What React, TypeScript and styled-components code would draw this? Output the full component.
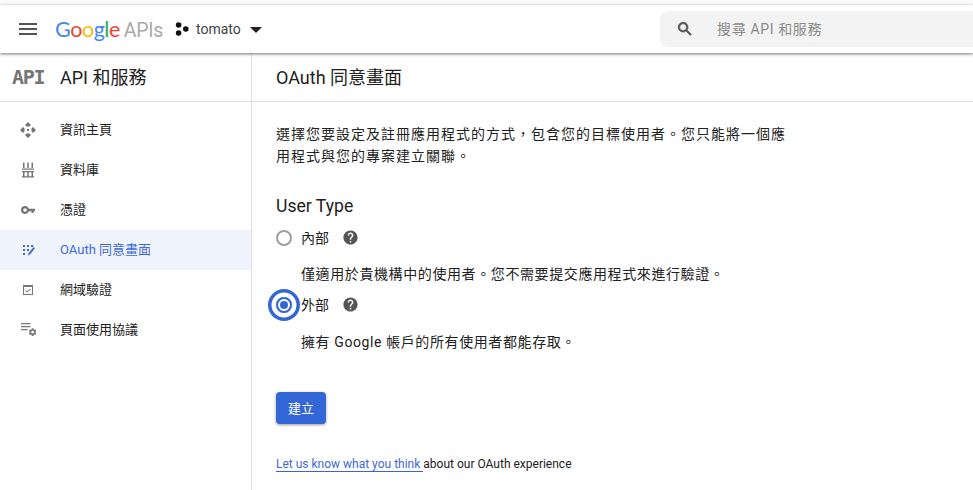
import React from "react";
import styled, { createGlobalStyle } from "styled-components";

const GlobalStyle = createGlobalStyle`
  html, body {
    margin: 0;
    padding: 0;
    background: #fff;
  }

  body {
    font-family: Roboto, "Noto Sans CJK TC", sans-serif;
    color: #212121;
    overflow: hidden;
  }
`;

const Page = styled.div`
  height: 490px;
  display: flex;
  flex-direction: column;
  padding-top: 5px;
  box-sizing: border-box;
  background: #fafafa;
`;

const TopBar = styled.header`
  height: 48px;
  flex: none;
  display: flex;
  align-items: center;
  background: #fff;
  box-shadow: 0 1px 3px 0 rgba(0, 0, 0, 0.55);
  position: relative;
  z-index: 1;
`;

const MenuButton = styled.svg`
  width: 24px;
  height: 24px;
  margin-left: 16px;
  fill: #555;
  flex: none;
`;

const Brand = styled.div`
  display: flex;
  align-items: baseline;
  margin-left: 15px;
  width: 106px;
  flex: none;
  font-family: Lato, sans-serif;
  font-size: 21.5px;
  letter-spacing: -0.5px;
`;

const BrandLetter = styled.span<{ $color: string }>`
  color: ${(p) => p.$color};
`;

const BrandSuffix = styled.span`
  margin-left: 4px;
  font-family: Roboto, sans-serif;
  font-size: 19.5px;
  letter-spacing: -0.3px;
  color: #a9a9a9;
`;

const ProjectPicker = styled.div`
  display: flex;
  align-items: center;
  margin-left: 14px;
  font-size: 14px;
  color: #424242;
`;

const ProjectIcon = styled.svg`
  width: 14px;
  height: 14px;
  margin-right: 7px;
`;

const Caret = styled.span`
  width: 0;
  height: 0;
  margin-left: 9px;
  margin-top: 2px;
  border-left: 6px solid transparent;
  border-right: 6px solid transparent;
  border-top: 6px solid #212121;
`;

const SearchBox = styled.div`
  margin-left: auto;
  width: 313px;
  height: 36px;
  display: flex;
  align-items: center;
  background: #f3f3f3;
  border-radius: 8px 0 0 8px;
  font-size: 14px;
  letter-spacing: 0.64px;
  color: #8a8a8a;
`;

const SearchIcon = styled.svg`
  width: 18px;
  height: 18px;
  margin-left: 16px;
  margin-right: 23px;
  fill: #555;
  stroke: #555;
  stroke-width: 1;
`;

/* CJK glyphs sit low in their line box, nudge the text up to its row's centre */
const Lifted = styled.span<{ $by?: number }>`
  margin-bottom: ${(p) => p.$by ?? 3}px;
`;

const Body = styled.div`
  flex: 1;
  display: flex;
  min-height: 0;
  background: #fff;
`;

const Sidebar = styled.nav`
  width: 251px;
  flex: none;
  border-right: 1px solid #e0e0e0;
`;

const SidebarHeader = styled.div`
  height: 48px;
  display: flex;
  align-items: center;
  border-bottom: 1px solid #e0e0e0;
  margin-bottom: 8px;
  font-size: 18px;
`;

const ApiMark = styled.span`
  width: 60px;
  padding-left: 12px;
  box-sizing: border-box;
  font-family: "DejaVu Sans Mono", monospace;
  font-weight: 700;
  font-size: 20px;
  letter-spacing: -1.3px;
  color: #757575;
`;

const NavItem = styled.div<{ $active?: boolean }>`
  height: 40px;
  display: flex;
  align-items: center;
  font-size: 13px;
  color: ${(p) => (p.$active ? "#3f6ad8" : "#212121")};
  background: ${(p) => (p.$active ? "#eff4fc" : "transparent")};
`;

const NavIconSlot = styled.svg<{ $active?: boolean }>`
  width: 16px;
  height: 16px;
  margin-left: 20px;
  margin-right: 24px;
  fill: ${(p) => (p.$active ? "#3f6ad8" : "#757575")};
  flex: none;
`;

const Main = styled.main`
  flex: 1;
  min-width: 0;
`;

const MainHeader = styled.div`
  height: 48px;
  display: flex;
  align-items: center;
  padding-left: 24px;
  border-bottom: 1px solid #e0e0e0;
  font-size: 18px;
`;

const Content = styled.div`
  padding: 21px 24px 0;
`;

const Intro = styled.p`
  margin: 0;
  width: 520px;
  font-size: 14px;
  line-height: 22px;
  letter-spacing: 1px;
`;

const SectionTitle = styled.h2`
  margin: 27px 0 0;
  font-size: 17.6px;
  font-weight: 400;
  line-height: 24px;
`;

const RadioRow = styled.div`
  display: flex;
  align-items: center;
  height: 24px;
  margin-top: 8px;
  font-size: 14px;
`;

const Radio = styled.span<{ $checked?: boolean }>`
  width: 16px;
  height: 16px;
  flex: none;
  box-sizing: border-box;
  margin-right: 9px;
  border-radius: 50%;
  border: 2px solid ${(p) => (p.$checked ? "#3367d6" : "#9e9e9e")};
  display: flex;
  align-items: center;
  justify-content: center;
  box-shadow: ${(p) =>
    p.$checked ? "0 0 0 4.5px #fff, 0 0 0 8px #3367d6" : "none"};
`;

const RadioDot = styled.span`
  width: 8px;
  height: 8px;
  border-radius: 50%;
  background: #3367d6;
`;

const HelpIcon = styled.svg`
  width: 17px;
  height: 17px;
  margin-left: 13px;
  margin-bottom: 2px;
  fill: #555;
`;

const Description = styled.div<{ $gap: number }>`
  margin: ${(p) => p.$gap}px 0 0 25px;
  font-size: 14px;
  line-height: 22px;
  letter-spacing: 0.6px;
`;

const PrimaryButton = styled.button`
  display: block;
  margin-top: 39px;
  width: 50px;
  height: 32px;
  padding: 0 0 2px;
  border: 0;
  border-radius: 4px;
  background: #3367d6;
  color: #fff;
  font-family: inherit;
  font-size: 13px;
  box-shadow: 0 1px 3px rgba(0, 0, 0, 0.4);
`;

const Feedback = styled.div`
  margin-top: 32px;
  font-size: 12px;
  line-height: 16px;
`;

const FeedbackLink = styled.a`
  color: #3f6ad8;
  border-bottom: 1px solid #3367d6;
  padding-right: 3px;
`;

const introText =
  "選擇您要設定及註冊應用程式的方式\uFF0C包含您的目標使用者。您只能將一個應用程式與您的專案建立關聯。";

const gearPath =
  "M19.14 12.94c.04-.3.06-.61.06-.94 0-.32-.02-.64-.07-.94l2.03-1.58c.18-.14.23-.41.12-.61l-1.92-3.32c-.12-.22-.37-.29-.59-.22l-2.39.96c-.5-.38-1.03-.7-1.62-.94l-.36-2.54c-.04-.24-.24-.41-.48-.41h-3.84c-.24 0-.43.17-.47.41l-.36 2.54c-.59.24-1.13.57-1.62.94l-2.39-.96c-.22-.08-.47 0-.59.22L2.74 8.87c-.12.21-.08.47.12.61l2.03 1.58c-.05.3-.09.63-.09.94s.02.64.07.94l-2.03 1.58c-.18.14-.23.41-.12.61l1.92 3.32c.12.22.37.29.59.22l2.39-.96c.5.38 1.03.7 1.62.94l.36 2.54c.05.24.24.41.48.41h3.84c.24 0 .44-.17.47-.41l.36-2.54c.59-.24 1.13-.56 1.62-.94l2.39.96c.22.08.47 0 .59-.22l1.92-3.32c.12-.22.07-.47-.12-.61l-2.01-1.58zM12 15.6c-1.98 0-3.6-1.62-3.6-3.6s1.62-3.6 3.6-3.6 3.6 1.62 3.6 3.6-1.62 3.6-3.6 3.6z";

const navItems: { label: string; active?: boolean; icon: React.ReactNode }[] = [
  {
    label: "資訊主頁",
    icon: (
      <path d="M8 0 11 3 9.500 4.500H6.500L5 3ZM8 16 5 13 6.500 11.500H9.500L11 13ZM0 8 3 5 4.500 6.500V9.500L3 11ZM16 8 13 11 11.500 9.500V6.500L13 5ZM7 7h2v2H7Z" />
    ),
  },
  {
    label: "資料庫",
    icon: (
      <path d="M3 0.500h1.500v5.500H3ZM7.250 0.500h1.500v5.500h-1.500ZM11.500 0.500H13v5.500h-1.500ZM2 6.500h12v1.200H2ZM2 9h12v1.200H2ZM3 10.200h1.500v4H3ZM7.250 10.200h1.500v4h-1.500ZM11.500 10.200H13v4h-1.500ZM2 14.300h12v1.200H2Z" />
    ),
  },
  {
    label: "憑證",
    icon: (
      <path
        fillRule="evenodd"
        d="M5 4a4 4 0 0 1 3.800 2.800H15v2.400h-1.300V11h-2.200V9.200H8.800A4 4 0 1 1 5 4Zm0 2.200a1.800 1.800 0 1 0 0 3.600 1.800 1.800 0 0 0 0-3.600Z"
      />
    ),
  },
  {
    label: "OAuth 同意畫面",
    active: true,
    icon: (
      <path d="M3 3h2v2H3ZM7 3h2v2H7ZM11 3h2v2h-2ZM3 7h2v2H3ZM7 7h2v2H7ZM3 11h2v2H3ZM13.500 5 15 6.300 10 12.500 8 13.500 8.500 11.300Z" />
    ),
  },
  {
    label: "網域驗證",
    icon: (
      <path
        fillRule="evenodd"
        d="M3 3h10v10H3Zm1 2v7h8V5ZM7 10.500 5.300 8.900l.7-.7 1 1 3-2.400.6.600Z"
      />
    ),
  },
  {
    label: "頁面使用協議",
    icon: (
      <>
        <path d="M1 1h9.500v1.300H1ZM1 4h9.500v1.300H1ZM1 7h6.500v1.300H1Z" />
        <path transform="translate(7.800 5.300) scale(.4)" d={gearPath} />
      </>
    ),
  },
];

const helpPath =
  "M12 2C6.480 2 2 6.480 2 12s4.480 10 10 10 10-4.480 10-10S17.520 2 12 2zm1 17h-2v-2h2v2zm2.070-7.750-.9.920C13.450 12.900 13 13.500 13 15h-2v-.5c0-1.100.45-2.100 1.170-2.830l1.240-1.260c.37-.36.590-.86.590-1.410 0-1.100-.9-2-2-2s-2 .9-2 2H8c0-2.210 1.790-4 4-4s4 1.790 4 4c0 .88-.36 1.680-.93 2.250z";

const HelpMark = () => (
  <HelpIcon viewBox="0 0 24 24">
    <path d={helpPath} />
  </HelpIcon>
);

export default function App() {
  return (
    <>
      <GlobalStyle />
      <Page>
        <TopBar>
          <MenuButton viewBox="0 0 24 24">
            <path d="M3 18h18v-2H3v2zm0-5h18v-2H3v2zm0-7v2h18V6H3z" />
          </MenuButton>
          <Brand>
            <BrandLetter $color="#4285f4">G</BrandLetter>
            <BrandLetter $color="#ea4335">o</BrandLetter>
            <BrandLetter $color="#fbbc05">o</BrandLetter>
            <BrandLetter $color="#4285f4">g</BrandLetter>
            <BrandLetter $color="#34a853">l</BrandLetter>
            <BrandLetter $color="#ea4335">e</BrandLetter>
            <BrandSuffix>APIs</BrandSuffix>
          </Brand>
          <ProjectPicker>
            <ProjectIcon viewBox="0 0 14 14">
              <circle cx="3.600" cy="3" r="2.800" fill="#111" />
              <circle cx="3.600" cy="11" r="2.800" fill="#111" />
              <circle cx="10.800" cy="7" r="2.800" fill="#111" />
            </ProjectIcon>
            tomato
            <Caret />
          </ProjectPicker>
          <SearchBox>
            <SearchIcon viewBox="0 0 24 24">
              <path d="M15.500 14h-.79l-.28-.27C15.410 12.590 16 11.110 16 9.500 16 5.910 13.090 3 9.500 3S3 5.910 3 9.500 5.910 16 9.500 16c1.610 0 3.090-.59 4.230-1.570l.27.28v.79l5 4.990L20.490 19l-4.990-5zm-6 0C7.010 14 5 11.990 5 9.500S7.010 5 9.500 5 14 7.010 14 9.500 11.990 14 9.500 14z" />
            </SearchIcon>
            <Lifted>搜尋 API 和服務</Lifted>
          </SearchBox>
        </TopBar>
        <Body>
          <Sidebar>
            <SidebarHeader>
              <ApiMark>API</ApiMark>
              <Lifted $by={2}>API 和服務</Lifted>
            </SidebarHeader>
            {navItems.map((item) => (
              <NavItem key={item.label} $active={item.active}>
                <NavIconSlot viewBox="0 0 16 16" $active={item.active}>
                  {item.icon}
                </NavIconSlot>
                <Lifted>{item.label}</Lifted>
              </NavItem>
            ))}
          </Sidebar>
          <Main>
            <MainHeader>
              <Lifted $by={2}>OAuth 同意畫面</Lifted>
            </MainHeader>
            <Content>
              <Intro>{introText}</Intro>
              <SectionTitle>User Type</SectionTitle>
              <RadioRow>
                <Radio />
                <Lifted $by={2}>內部</Lifted>
                <HelpMark />
              </RadioRow>
              <Description $gap={13}>
                僅適用於貴機構中的使用者。您不需要提交應用程式來進行驗證。
              </Description>
              <RadioRow>
                <Radio $checked>
                  <RadioDot />
                </Radio>
                <Lifted $by={2}>外部</Lifted>
                <HelpMark />
              </RadioRow>
              <Description $gap={14}>
                擁有 Google 帳戶的所有使用者都能存取。
              </Description>
              <PrimaryButton>建立</PrimaryButton>
              <Feedback>
                <FeedbackLink>Let us know what you think</FeedbackLink>
                about our OAuth experience
              </Feedback>
            </Content>
          </Main>
        </Body>
      </Page>
    </>
  );
}
